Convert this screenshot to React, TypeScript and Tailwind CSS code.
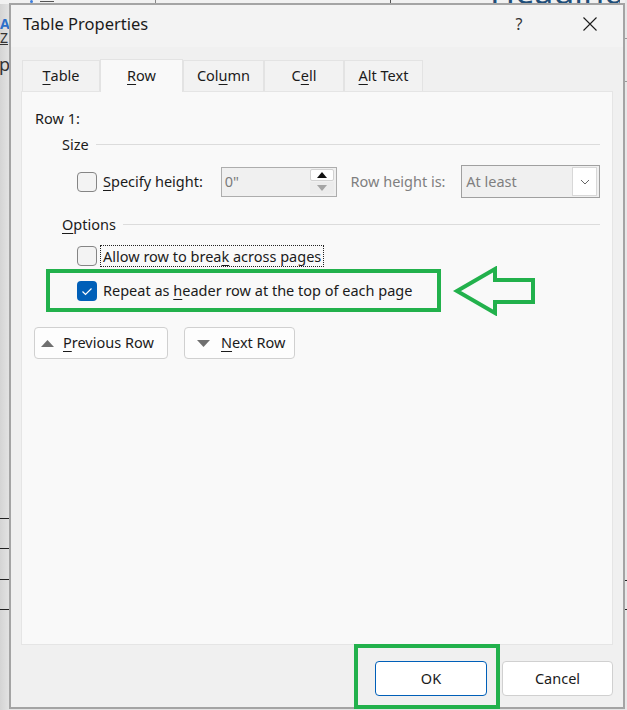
import type { ReactNode } from "react";

function Key({ children }: { children: ReactNode }) {
  return <u className="underline decoration-1 underline-offset-[3px]">{children}</u>;
}

function Checkbox({ checked = false }: { checked?: boolean }) {
  if (checked) {
    return (
      <div className="flex h-[20px] w-[20px] shrink-0 items-center justify-center rounded-[4px] bg-[#005fb8]">
        <svg width="20" height="20" viewBox="0 0 20 20">
          <path d="M5.5 10.5 L8.5 13.5 L14.5 7.5" fill="none" stroke="#fff" strokeWidth="1.2" />
        </svg>
      </div>
    );
  }
  return <div className="h-[20px] w-[20px] shrink-0 rounded-[4px] border border-[#858585] bg-[#f3f3f3]" />;
}

function SectionHead({ children }: { children: ReactNode }) {
  return (
    <div className="flex h-[20px] items-center pl-[27px]">
      <span className="leading-[20px]">{children}</span>
      <div className="ml-[7px] h-px flex-1 bg-[#dcdcdc]" />
    </div>
  );
}

function Backdrop() {
  return (
    <>
      {/* word document peeking out behind the dialog */}
      <div className="absolute left-0 top-0 h-full w-[10px] bg-gradient-to-r from-[#d4d4d4] to-[#e4e4e4]" />
      <div className="absolute left-0 top-0 h-[4px] w-full bg-[#f1f1f1]" />
      <div className="absolute left-[30px] top-0 h-[3px] w-[3px] rounded-full bg-[#3b7ddd]" />
      <div className="absolute left-[40px] top-[1px] h-px w-[14px] bg-[#555]" />
      <div className="absolute left-[155px] top-0 h-[3px] w-px bg-[#888]" />
      <div className="absolute left-[390px] top-0 h-[3px] w-px bg-[#555]" />
      <div className="absolute left-[490px] top-0 h-[4px] w-[130px] overflow-hidden">
        <span className="block -mt-[22px] text-[34px] leading-[26px] text-[#1f4e79]">Heading</span>
      </div>
      <span className="absolute left-0 top-[18px] text-[14px] font-bold leading-[12px] text-[#2b6fc9]">A</span>
      <span className="absolute left-0 top-[32px] text-[14px] leading-[12px] text-[#333] underline">Z</span>
      <span className="absolute left-[-1px] top-[55px] text-[18px] leading-[18px] text-[#333]">pl</span>
      <div className="absolute left-0 top-[518px] h-px w-[10px] bg-[#222]" />
      <div className="absolute left-0 top-[548px] h-px w-[10px] bg-[#222]" />
      <div className="absolute left-0 top-[579px] h-px w-[10px] bg-[#222]" />
      <div className="absolute left-0 top-[609px] h-px w-[10px] bg-[#222]" />
      <div className="absolute right-0 top-0 h-full w-[2px] bg-[#e8e8e8]" />
      <div className="absolute right-0 top-[38px] h-px w-[2px] bg-[#999]" />
      <div className="absolute right-0 top-[81px] h-px w-[2px] bg-[#999]" />
      <div className="absolute right-0 top-[580px] h-px w-[2px] bg-[#222]" />
      <div className="absolute right-0 top-[609px] h-px w-[2px] bg-[#222]" />
    </>
  );
}

const tabs = [
  { label: <><Key>T</Key>able</>, w: "w-[78px]" },
  { label: <><Key>R</Key>ow</>, w: "w-[83px]", active: true },
  { label: <>Col<Key>u</Key>mn</>, w: "w-[81px]" },
  { label: <>C<Key>e</Key>ll</>, w: "w-[80px]" },
  { label: <><Key>A</Key>lt Text</>, w: "w-[79px]" },
];

function Dialog() {
  return (
    <div className="relative z-10 flex h-[706px] w-[616px] flex-col border-2 border-[#a4a4a4] bg-[#f0f0f0]">
      {/* title bar */}
      <div className="flex h-[42px] items-center bg-[#f3f3f3] pb-[4px] pl-[12px]">
        <span className="text-[16.5px] text-[#1b1b1b]">Table Properties</span>
        <span className="ml-auto flex w-[46px] justify-center text-[16px] text-[#333]">?</span>
        <span className="ml-[25px] mr-[10px] flex w-[46px] justify-center">
          <svg width="16" height="16" viewBox="0 0 16 16">
            <path d="M1.5 1.5 L14.5 14.5 M14.5 1.5 L1.5 14.5" stroke="#1b1b1b" strokeWidth="1.1" />
          </svg>
        </span>
      </div>

      {/* tabs */}
      <div className="flex h-[45px] items-end pl-[11px]">
        {tabs.map((t, i) =>
          t.active ? (
            <div
              key={i}
              className={`${t.w} relative z-10 flex h-[33px] items-center justify-center border border-b-0 border-[#e3e3e3] bg-[#f9f9f9] pb-[1px]`}
            >
              {t.label}
            </div>
          ) : (
            <div
              key={i}
              className={`${t.w} flex h-[32px] items-center justify-center border border-[#e3e3e3] bg-[#f2f2f2]`}
            >
              {t.label}
            </div>
          )
        )}
      </div>

      {/* panel */}
      <div className="relative mx-[10px] -mt-px flex h-[554px] flex-col border border-[#e5e5e5] bg-[#f9f9f9] pl-[13px] pr-[12px]">
        <div className="mt-[16px] h-[20px] leading-[20px]">Row 1:</div>

        <div className="mt-[6px]">
          <SectionHead>Size</SectionHead>
        </div>

        <div className="mt-[11px] flex h-[33px] items-center pl-[42px]">
          <div className="flex w-[144px] items-center">
            <Checkbox />
            <span className="ml-[6px]">
              <Key>S</Key>pecify height:
            </span>
          </div>
          <div className="flex h-[30px] w-[116px] items-center border border-[#adadad] bg-[#f0f0f0]">
            <span className="pl-[3px] text-[#7a7a7a]">0"</span>
            <div className="ml-auto mr-[2px] flex flex-col gap-[1px]">
              <div className="flex h-[12px] w-[24px] items-center justify-center rounded-[2px] border border-[#d2d2d2] bg-white">
                <svg width="10" height="6" viewBox="0 0 10 6">
                  <path d="M0 6 L5 0 L10 6 Z" fill="#111" />
                </svg>
              </div>
              <div className="flex h-[12px] w-[24px] items-center justify-center bg-[#ececec]">
                <svg width="10" height="6" viewBox="0 0 10 6">
                  <path d="M0 0 L5 6 L10 0 Z" fill="#a5a5a5" />
                </svg>
              </div>
            </div>
          </div>
          <span className="ml-[14px] w-[111px] text-[#7f7f7f]">Row height is:</span>
          <div className="flex h-[33px] w-[139px] items-center border border-[#a0a0a0] bg-[#f0f0f0]">
            <span className="pl-[4px] text-[#7f7f7f]">At least</span>
            <div className="ml-auto mr-[2px] flex h-[29px] w-[25px] items-center justify-center border border-[#d8d8d8] bg-white">
              <svg width="10" height="6" viewBox="0 0 10 6">
                <path d="M1 1 L5 5 L9 1" fill="none" stroke="#666" strokeWidth="1" />
              </svg>
            </div>
          </div>
        </div>

        <div className="mt-[16px]">
          <SectionHead>
            <Key>O</Key>ptions
          </SectionHead>
        </div>

        <div className="mt-[11px] flex h-[22px] items-center pl-[42px]">
          <Checkbox />
          <span className="ml-[3px] border border-dotted border-[#222] px-[2px] leading-[20px]">
            Allow row to brea<Key>k</Key> across pages
          </span>
        </div>

        <div className="mt-[2px] flex h-[43px] items-center">
          <div className="ml-[11px] flex h-[43px] w-[395px] shrink-0 items-center border-4 border-[#22b14c] pl-[27px]">
            <Checkbox checked />
            <span className="ml-[6px]">
              Repeat as <Key>h</Key>eader row at the top of each page
            </span>
          </div>
          <svg className="ml-[12px] shrink-0" width="84" height="50" viewBox="0 0 84 50">
            <path
              d="M4 25 L42 3 L42 14 L80 14 L80 36 L42 36 L42 47 Z"
              fill="none"
              stroke="#22b14c"
              strokeWidth="4"
            />
          </svg>
        </div>

        <div className="-ml-px mt-[15px] flex gap-[16px]">
          <button className="flex h-[32px] w-[134px] items-center rounded-[4px] border border-[#d0d0d0] bg-[#fdfdfd] pl-[6px]">
            <svg width="13" height="7" viewBox="0 0 13 7">
              <path d="M0 7 L6.5 0 L13 7 Z" fill="#6f6f6f" />
            </svg>
            <span className="ml-[9px]">
              <Key>P</Key>revious Row
            </span>
          </button>
          <button className="flex h-[32px] w-[111px] items-center rounded-[4px] border border-[#d0d0d0] bg-[#fdfdfd] pl-[12px]">
            <svg width="13" height="7" viewBox="0 0 13 7">
              <path d="M0 0 L6.5 7 L13 0 Z" fill="#6f6f6f" />
            </svg>
            <span className="ml-[11px]">
              <Key>N</Key>ext Row
            </span>
          </button>
        </div>
      </div>

      {/* footer */}
      <div className="relative flex flex-1 justify-end gap-[15px] pr-[10px] pt-[16px]">
        <button className="flex h-[35px] w-[112px] items-center justify-center rounded-[4px] border border-[#005fb8] bg-white">
          OK
        </button>
        <button className="flex h-[35px] w-[111px] items-center justify-center rounded-[4px] border border-[#d0d0d0] bg-white">
          Cancel
        </button>
        {/* annotation box */}
        <div className="absolute left-[343px] top-[-1px] h-[65px] w-[146px] border-4 border-[#22b14c]" />
      </div>
    </div>
  );
}

export default function App() {
  return (
    <div className="relative h-[710px] w-[627px] overflow-hidden bg-[#e4e4e4] font-['Noto_Sans',sans-serif] text-[14.5px] text-[#1b1b1b]">
      <Backdrop />
      <div className="relative z-10 pl-[9px] pt-[3px]">
        <Dialog />
      </div>
    </div>
  );
}
